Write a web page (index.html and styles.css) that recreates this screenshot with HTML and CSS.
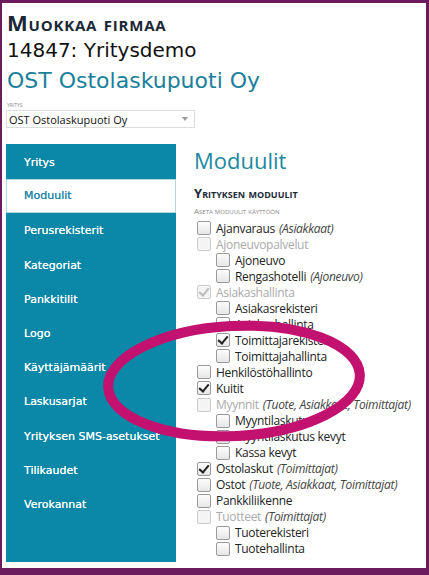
FILE: index.html
```html
<!DOCTYPE html>
<html lang="fi">
<head>
<meta charset="UTF-8">
<meta name="viewport" content="width=device-width, initial-scale=1.0">
<title>Muokkaa firmaa</title>
<link rel="stylesheet" href="styles.css">
</head>
<body>
<div id="page">
    <div class="header">
        <h1 class="title">Muokkaa firmaa</h1>
        <div class="company-id">14847: Yritysdemo</div>
        <div class="company-name">OST Ostolaskupuoti Oy</div>
        <label class="small-label">Yritys</label>
        <div class="select">
            <span>OST Ostolaskupuoti Oy</span>
            <span class="arrow"></span>
        </div>
    </div>

    <div class="content">
        <ul class="sidemenu">
            <li>Yritys</li>
            <li class="active">Moduulit</li>
            <li>Perusrekisterit</li>
            <li>Kategoriat</li>
            <li>Pankkitilit</li>
            <li>Logo</li>
            <li>Käyttäjämäärit</li>
            <li>Laskusarjat</li>
            <li>Yrityksen SMS-asetukset</li>
            <li>Tilikaudet</li>
            <li>Verokannat</li>
        </ul>

        <div class="main">
            <h2>Moduulit</h2>
            <h3>Yrityksen moduulit</h3>
            <div class="small-label">Aseta moduulit käyttöön</div>
            <ul class="modules">
                <li><span class="cb"></span>Ajanvaraus <i>(Asiakkaat)</i></li>
                <li class="disabled"><span class="cb"></span>Ajoneuvopalvelut</li>
                <li class="sub"><span class="cb"></span>Ajoneuvo</li>
                <li class="sub"><span class="cb"></span>Rengashotelli <i>(Ajoneuvo)</i></li>
                <li class="disabled"><span class="cb checked"></span>Asiakashallinta</li>
                <li class="sub"><span class="cb"></span>Asiakasrekisteri</li>
                <li class="sub"><span class="cb"></span>Asiakashallinta</li>
                <li class="sub"><span class="cb checked"></span>Toimittajarekisteri</li>
                <li class="sub"><span class="cb"></span>Toimittajahallinta</li>
                <li><span class="cb"></span>Henkilöstöhallinto</li>
                <li><span class="cb checked"></span>Kuitit</li>
                <li class="disabled"><span class="cb"></span>Myynnit <i>(Tuote, Asiakkaat, Toimittajat)</i></li>
                <li class="sub"><span class="cb"></span>Myyntilaskutus</li>
                <li class="sub"><span class="cb"></span>Myyntilaskutus kevyt</li>
                <li class="sub"><span class="cb"></span>Kassa kevyt</li>
                <li><span class="cb checked"></span>Ostolaskut <i>(Toimittajat)</i></li>
                <li><span class="cb"></span>Ostot <i>(Tuote, Asiakkaat, Toimittajat)</i></li>
                <li><span class="cb"></span>Pankkiliikenne</li>
                <li class="disabled"><span class="cb"></span>Tuotteet <i>(Toimittajat)</i></li>
                <li class="sub"><span class="cb"></span>Tuoterekisteri</li>
                <li class="sub"><span class="cb"></span>Tuotehallinta</li>
            </ul>
        </div>
    </div>

    <!-- annotation drawn over the screenshot -->
    <svg class="mark" width="429" height="575" viewBox="0 0 429 575">
        <ellipse cx="234" cy="381" rx="126" ry="55" transform="rotate(-3 234 381)"
                 fill="none" stroke="#c2116e" stroke-width="10"/>
    </svg>
</div>
</body>
</html>
```

FILE: styles.css
```css
body {
    margin: 0;
    padding: 3px 3px 7px 2px;
    background-color: #6c1b5e;
    font-family: 'Open Sans', 'Noto Sans', sans-serif;
    color: #222;
}
#page {
    background-color: #fff;
    height: 565px;
    padding: 0 4px;
    box-sizing: border-box;
}
.header {
    padding: 7px 0 0 1px;
}
.title {
    margin: 0;
    font-size: 22px;
    font-variant: small-caps;
    font-weight: bold;
    letter-spacing: 0.8px;
    color: #1a2736;
    line-height: 24px;
}
.company-id {
    font-family: 'DejaVu Sans', sans-serif;
    font-size: 20px;
    line-height: 32px;
    color: #111;
}
.company-name {
    font-family: 'DejaVu Sans', sans-serif;
    font-size: 22px;
    line-height: 30px;
    color: #1b7f9c;
}
.small-label {
    display: block;
    font-size: 7px;
    font-variant: small-caps;
    text-transform: lowercase;
    color: #888;
    margin-top: 4px;
    line-height: 10px;
}
.header .select {
    margin-left: -1px;
}
.select {
    width: 189px;
    height: 18px;
    border: 1px solid #ddd;
    box-sizing: border-box;
    display: flex;
    align-items: center;
    justify-content: space-between;
    padding: 0 6px 0 2px;
    font-size: 11px;
    color: #111;
}
.arrow {
    border-left: 3px solid transparent;
    border-right: 3px solid transparent;
    border-top: 4px solid #999;
}
.content {
    display: flex;
    margin-top: 16px;
}
.sidemenu {
    list-style: none;
    margin: 0;
    padding: 1px 0 0;
    width: 170px;
    height: 418px;
    box-sizing: border-box;
    background-color: #0b87a8;
    font-family: 'DejaVu Sans', sans-serif;
    font-size: 11px;
    color: #fff;
}
.sidemenu li {
    height: 34.2px;
    line-height: 36px;
    padding-left: 18px;
    white-space: nowrap;
    text-shadow: 0 0 0.4px #fff;
}
.sidemenu li.active {
    background-color: #fff;
    color: #2a86a4;
    border: 1px solid #b3d6e1;
    line-height: 32px;
    box-sizing: border-box;
    padding-left: 17px;
    text-shadow: 0 0 0.4px #2a86a4;
}
.main {
    padding-left: 18px;
}
h2 {
    margin: 2px 0 0;
    font-weight: normal;
    font-size: 22px;
    line-height: 28px;
    color: #1b87a3;
}
h3 {
    margin: 11px 0 0;
    font-size: 13px;
    font-weight: bold;
    font-variant: small-caps;
    text-transform: lowercase;
    color: #1d2a3a;
    line-height: 16px;
}
h3::first-letter {
    text-transform: uppercase;
}
.main .small-label {
    margin-top: 5px;
    font-size: 8px;
}
.main .small-label::first-letter {
    text-transform: uppercase;
}
.modules {
    list-style: none;
    margin: 4px 0 0;
    padding: 0;
    font-size: 12px;
    letter-spacing: -0.3px;
}
.modules li {
    display: flex;
    align-items: center;
    height: 16.05px;
    white-space: nowrap;
    padding-left: 3px;
}
.modules li.sub {
    padding-left: 22px;
}
.modules li.disabled {
    color: #aaa;
}
.modules i {
    margin-left: 4px;
    color: #444;
}
.cb {
    width: 12px;
    height: 12px;
    border: 1px solid #9a9a9a;
    border-radius: 2px;
    background: linear-gradient(#fdfdfd, #e6e6e6);
    margin-right: 5px;
    flex-shrink: 0;
    position: relative;
}
.disabled .cb {
    border-color: #ccc;
    background: #f4f4f4;
}
.cb.checked::after {
    content: '';
    position: absolute;
    left: 3px;
    top: 0px;
    width: 4px;
    height: 8px;
    border-right: 2px solid #222;
    border-bottom: 2px solid #222;
    transform: rotate(40deg);
}
.disabled .cb.checked::after {
    border-color: #bbb;
}
.mark {
    position: absolute;
    top: 0;
    left: 0;
    pointer-events: none;
}
```
